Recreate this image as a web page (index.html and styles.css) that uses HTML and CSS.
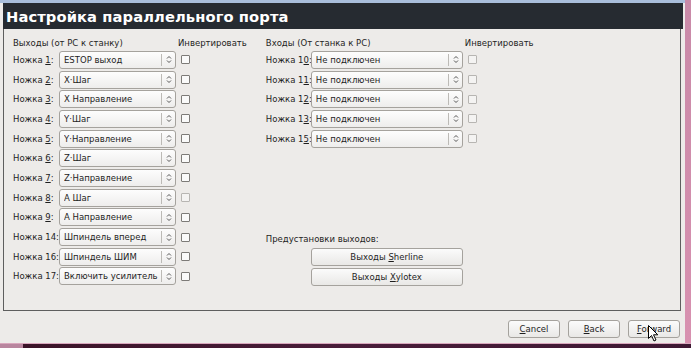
FILE: index.html
```html
<!DOCTYPE html>
<html lang="ru">

<head>
    <meta charset="UTF-8">
    <title>Настройка параллельного порта</title>
    <link rel="stylesheet" href="styles.css">
</head>

<body>
    <div class="screen">
        <div class="window">
            <div class="titlebar">
                <h1>Настройка параллельного порта</h1>
            </div>

            <div class="frame">
                <section class="col col-out">
                    <div class="row head">
                        <span>Выходы (от PC к станку)</span>
                        <span>Инвертировать</span>
                    </div>
                    <div class="row"><label>Ножка <u>1</u>:</label><div class="combo"><span>ESTOP выход</span><i></i></div><b class="chk"></b></div>
                    <div class="row"><label>Ножка <u>2</u>:</label><div class="combo"><span>X·Шаг</span><i></i></div><b class="chk"></b></div>
                    <div class="row"><label>Ножка <u>3</u>:</label><div class="combo"><span>X Направление</span><i></i></div><b class="chk"></b></div>
                    <div class="row"><label>Ножка <u>4</u>:</label><div class="combo"><span>Y·Шаг</span><i></i></div><b class="chk"></b></div>
                    <div class="row"><label>Ножка <u>5</u>:</label><div class="combo"><span>Y·Направление</span><i></i></div><b class="chk"></b></div>
                    <div class="row"><label>Ножка <u>6</u>:</label><div class="combo"><span>Z·Шаг</span><i></i></div><b class="chk"></b></div>
                    <div class="row"><label>Ножка <u>7</u>:</label><div class="combo"><span>Z·Направление</span><i></i></div><b class="chk"></b></div>
                    <div class="row"><label>Ножка <u>8</u>:</label><div class="combo"><span>A Шаг</span><i></i></div><b class="chk dim"></b></div>
                    <div class="row"><label>Ножка <u>9</u>:</label><div class="combo"><span>A Направление</span><i></i></div><b class="chk"></b></div>
                    <div class="row"><label>Ножка 14:</label><div class="combo"><span>Шпиндель вперед</span><i></i></div><b class="chk"></b></div>
                    <div class="row"><label>Ножка 16:</label><div class="combo"><span>Шпиндель ШИМ</span><i></i></div><b class="chk"></b></div>
                    <div class="row"><label>Ножка 17:</label><div class="combo"><span>Включить усилитель</span><i></i></div><b class="chk"></b></div>
                </section>

                <section class="col col-in">
                    <div class="row head">
                        <span>Входы (От станка к PC)</span>
                        <span>Инвертировать</span>
                    </div>
                    <div class="row"><label>Ножка 1<u>0</u>:</label><div class="combo"><span>Не подключен</span><i></i></div><b class="chk dim"></b></div>
                    <div class="row"><label>Ножка 1<u>1</u>:</label><div class="combo"><span>Не подключен</span><i></i></div><b class="chk dim"></b></div>
                    <div class="row"><label>Ножка 1<u>2</u>:</label><div class="combo"><span>Не подключен</span><i></i></div><b class="chk dim"></b></div>
                    <div class="row"><label>Ножка 1<u>3</u>:</label><div class="combo"><span>Не подключен</span><i></i></div><b class="chk dim"></b></div>
                    <div class="row"><label>Ножка 1<u>5</u>:</label><div class="combo"><span>Не подключен</span><i></i></div><b class="chk dim"></b></div>

                    <div class="presets">
                        <p>Предустановки выходов:</p>
                        <button>Выходы <u>S</u>herline</button>
                        <button>Выходы <u>X</u>ylotex</button>
                    </div>
                </section>
            </div>

            <div class="actions">
                <button><u>C</u>ancel</button>
                <button><u>B</u>ack</button>
                <button class="fwd"><u>F</u>orward
                    <svg class="cursor" width="11" height="17" viewBox="0 0 11 17">
                        <path d="M0.5 0.5 L0.5 13.5 L3.5 10.5 L6 16 L8 15 L5.5 9.8 L9.8 9.8 Z" fill="#fff" stroke="#000" stroke-width="1"/>
                    </svg>
                </button>
            </div>
        </div>
        <div class="taskbar"><span class="start"></span></div>
    </div>
</body>

</html>
```

FILE: styles.css
```css
* {
    box-sizing: border-box;
}

body {
    margin: 0;
    font-family: "DejaVu Sans", sans-serif;
    font-size: 8.5px;
    color: #1e1e1e;
}

.screen {
    width: 691px;
    height: 348px;
    background: linear-gradient(#c98aa8, #d891b0);
    display: flex;
    flex-direction: column;
    overflow: hidden;
}

.window {
    width: 685px;
    height: 343px;
    background-color: #edebe9;
    border-top: 3px solid #a9bedb;
    padding: 0 2px 0 3px;
    display: flex;
    flex-direction: column;
}

.titlebar {
    background-color: #262b31;
    height: 26px;
    display: flex;
    align-items: center;
    padding-left: 3px;
}

.titlebar h1 {
    margin: 0;
    color: #fff;
    font-size: 14.7px;
    font-weight: bold;
    letter-spacing: 0.1px;
}

.frame {
    height: 282px;
    border: 1px solid #5e5e5e;
    border-top: none;
    margin-right: 2px;
    display: flex;
    padding: 7px 0 0 9px;
}

.row {
    display: grid;
    align-items: center;
    height: 19.7px;
    white-space: nowrap;
}

.col-out .row {
    grid-template-columns: 46px 117px 14px;
}

.col-in {
    margin-left: 19px;
}

.col-in .row {
    grid-template-columns: 45px 152px 14px;
}

.row.head {
    height: 14px;
}

.col-out .row.head {
    grid-template-columns: 165px auto;
}

.col-in .row.head {
    grid-template-columns: 199px auto;
}

.row label u,
button u {
    text-decoration-thickness: 1px;
    text-underline-offset: 1px;
}

.combo {
    height: 18px;
    border: 1px solid #a5a29d;
    border-radius: 3px;
    background: linear-gradient(#fdfdfd, #eeedec);
    display: flex;
    align-items: center;
    padding-left: 4px;
    white-space: nowrap;
}

.combo span {
    flex: 1;
    overflow: hidden;
}

.combo i {
    width: 14px;
    height: 12px;
    border-left: 1px solid #bcbab6;
    background: url("data:image/svg+xml;utf8,<svg xmlns='http://www.w3.org/2000/svg' width='6' height='9' viewBox='0 0 6 9'><path d='M1 3.5 L3 1.5 L5 3.5 M1 5.5 L3 7.5 L5 5.5' fill='none' stroke='%23555' stroke-width='1'/></svg>") no-repeat 4px 1.5px;
}

.chk {
    width: 9px;
    height: 9px;
    margin-left: 5px;
    border: 1px solid #7d7b78;
    border-radius: 1px;
    background-color: #fafafa;
}

.chk.dim {
    border-color: #b7b5b2;
    background-color: #f4f3f2;
}

.presets {
    margin-top: 86px;
    display: flex;
    flex-direction: column;
}

.presets p {
    margin: 0 0 4px;
}

button {
    font-family: "DejaVu Sans", sans-serif;
    font-size: 8.5px;
    color: #1e1e1e;
    height: 18px;
    border: 1px solid #a5a29d;
    border-radius: 3px;
    background: linear-gradient(#fbfbfb, #e9e8e6);
    padding: 0;
}

.presets button {
    width: 152px;
    margin-left: 45px;
    margin-bottom: 2px;
}

.actions {
    display: flex;
    justify-content: flex-end;
    gap: 8px;
    padding: 9px 3px 0 0;
}

.actions button {
    width: 52px;
}

.fwd {
    position: relative;
}

.cursor {
    position: absolute;
    left: 19px;
    top: 4px;
}

.taskbar {
    height: 5px;
    background: linear-gradient(90deg, #3a1327, #4a1d3a 50%, #3e1833);
    border-top: 1px solid #d9a7bd;
}

.start {
    display: block;
    width: 23px;
    height: 4px;
    background-color: #b9869f;
}
```
